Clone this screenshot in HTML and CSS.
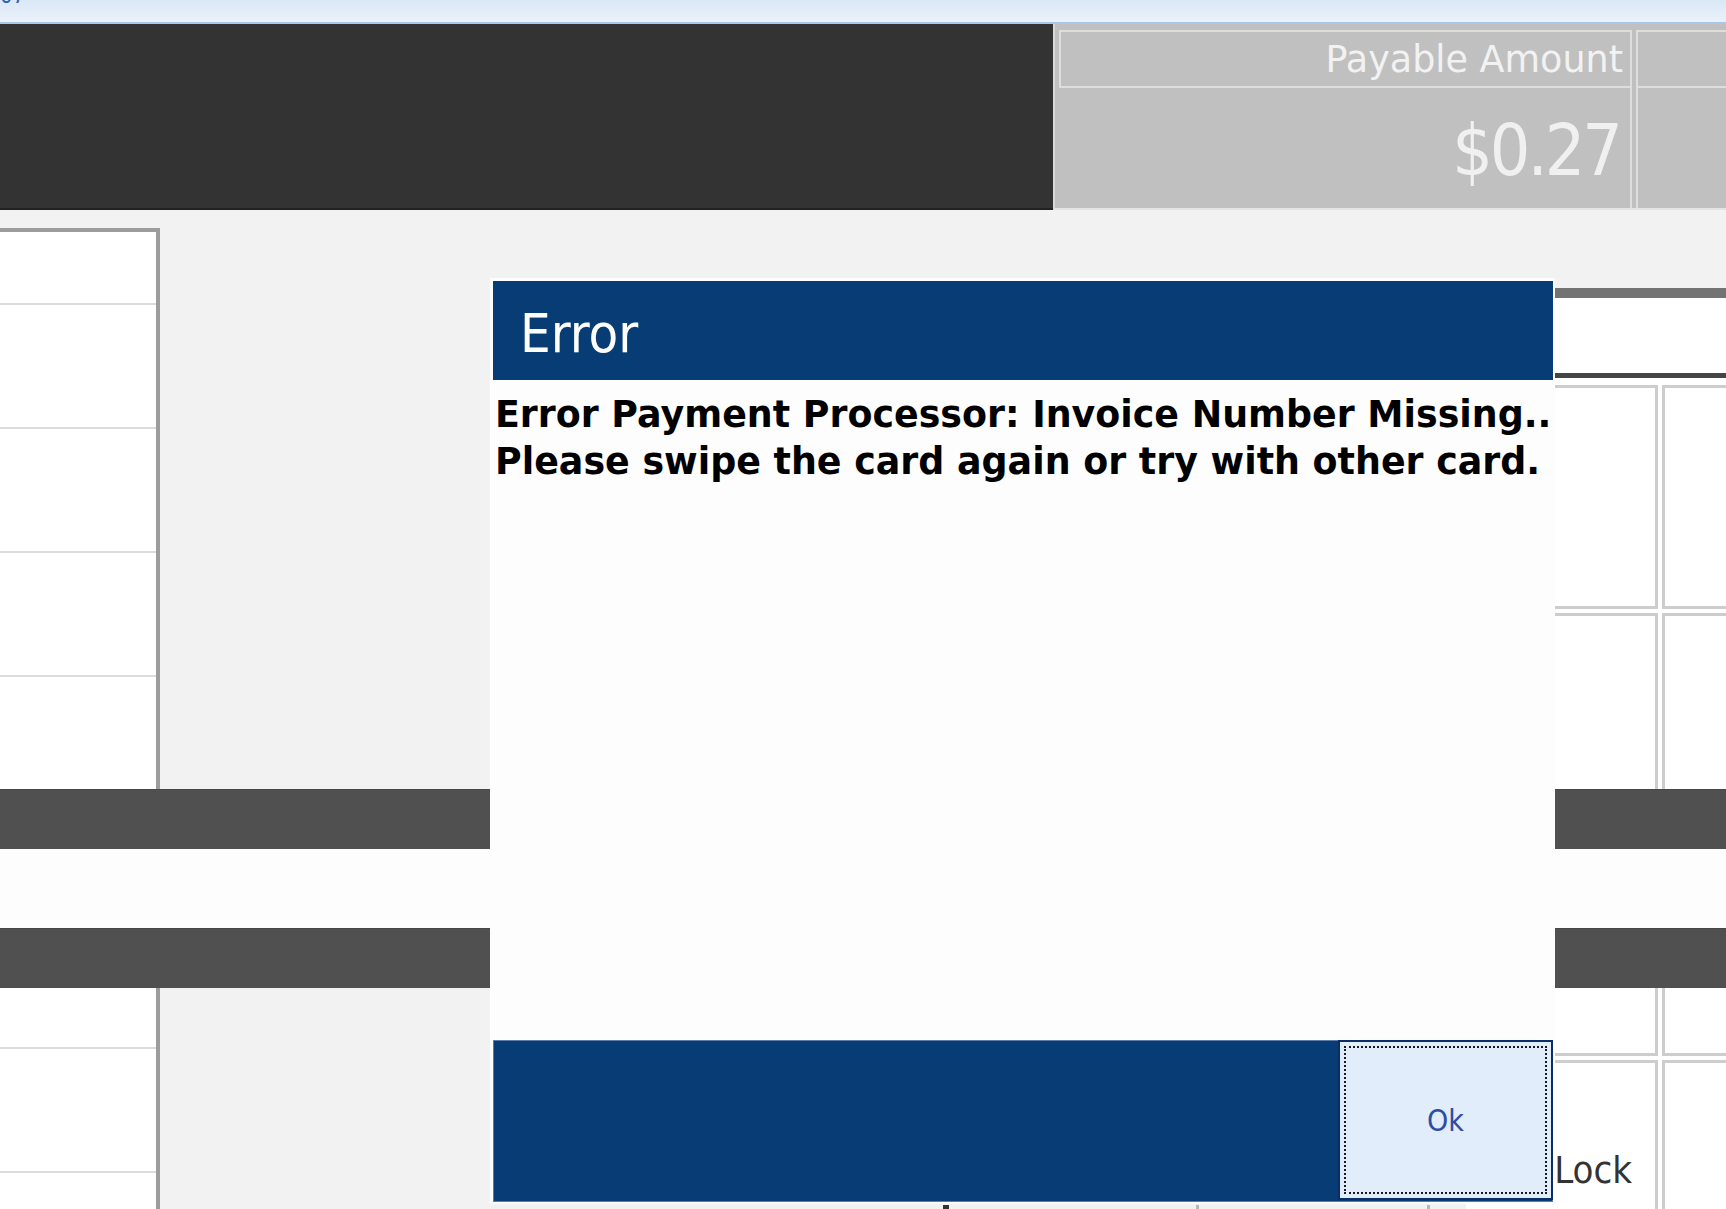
FILE: index.html
```html
<!DOCTYPE html>
<html lang="en">
<head>
    <meta charset="UTF-8">
    <meta name="viewport" content="width=device-width, initial-scale=1.0">
    <title>POS - Error</title>
    <link rel="stylesheet" href="styles.css">
</head>
<body>
    <!-- window caption strip (mostly scrolled off) -->
    <div class="titlestrip"><span class="clock">07</span></div>

    <!-- header with totals -->
    <header class="topbar">
        <div class="brand"></div>
        <div class="totals">
            <div class="total-label">Payable Amount</div>
            <div class="total-label next"></div>
            <div class="total-value">$0.27</div>
            <div class="total-value next"></div>
        </div>
    </header>

    <!-- upper work area -->
    <section class="upper">
        <ul class="ticket">
            <li class="first"></li>
            <li></li>
            <li></li>
            <li></li>
            <li></li>
        </ul>
        <div class="workspace"></div>
        <div class="keys">
            <div class="keys-head"></div>
            <div class="key-grid">
                <div class="key left"></div>
                <div class="key"></div>
                <div class="key left"></div>
                <div class="key"></div>
            </div>
        </div>
    </section>

    <div class="strip"></div>
    <div class="spacer"></div>
    <div class="strip"></div>

    <!-- lower work area -->
    <section class="lower">
        <ul class="ticket">
            <li class="first"></li>
            <li></li>
            <li></li>
        </ul>
        <div class="workspace">
            <div class="marks">
                <span class="mark dark"></span>
                <span class="mark"></span>
                <span class="mark last"></span>
            </div>
        </div>
        <div class="keys">
            <div class="key-grid">
                <div class="key top left"></div>
                <div class="key top"></div>
                <div class="key left"><span class="key-text">Lock</span></div>
                <div class="key"></div>
            </div>
        </div>
    </section>

    <!-- error dialog on top of everything -->
    <div class="dialog">
        <div class="dialog-title">Error</div>
        <div class="dialog-body">
            <p class="message">Error Payment Processor: Invoice Number Missing..</p>
            <p class="message">Please swipe the card again or try with other card.</p>
        </div>
        <div class="dialog-foot">
            <button class="ok-button">Ok</button>
        </div>
    </div>
</body>
</html>
```

FILE: styles.css
```css
body {
    margin: 0;
    padding: 0;
    height: 1209px;
    overflow: hidden;
    background-color: #f2f2f2;
    font-family: "DejaVu Sans Condensed", "DejaVu Sans", sans-serif;
    position: relative;
}

/* caption strip */
.titlestrip {
    height: 22px;
    overflow: hidden;
    background: linear-gradient(#dbe7f6, #eaf2fb);
    border-bottom: 2px solid #a9c5e9;
}

.clock {
    display: block;
    margin-top: -17px;
    font-size: 22px;
    color: #2d5fb3;
}

/* header */
.topbar {
    display: flex;
    height: 186px;
    box-sizing: border-box;
}

.brand {
    width: 1053px;
    background-color: #333;
    border-bottom: 2px solid #222;
}

.totals {
    flex: 1;
    display: grid;
    grid-template-columns: 577px 1fr;
    grid-template-rows: 58px 1fr;
    column-gap: 4px;
    padding-top: 6px;
    background-color: #c0c0c0;
    border-left: 2px solid #d8d8d8;
    border-bottom: 2px solid #e4e4e4;
}

.total-label {
    margin-left: 4px;
    border: 2px solid #dedede;
    padding: 3px 7px 0 0;
    text-align: right;
    font-family: "DejaVu Sans", sans-serif;
    font-size: 36.5px;
    line-height: 50px;
    color: #f2f2f2;
    white-space: nowrap;
}

.total-label.next {
    margin-left: 0;
    border-right: none;
}

.total-value {
    border-right: 2px solid #dedede;
    padding: 23px 10px 0 0;
    text-align: right;
    font-size: 71px;
    line-height: 80px;
    letter-spacing: -3px;
    color: #f0f0f0;
}

.total-value.next {
    border-right: none;
    border-left: 2px solid #dedede;
}

/* work areas */
.upper {
    display: flex;
    height: 579px;
}

.lower {
    display: flex;
    height: 221px;
}

.ticket {
    flex-shrink: 0;
    list-style: none;
    margin: 18px 0 0 0;
    padding: 0;
    width: 156px;
    background-color: #fff;
    border-top: 4px solid #9c9c9c;
    border-right: 4px solid #9c9c9c;
    overflow: hidden;
}

.lower .ticket {
    margin-top: 0;
    border-top: none;
}

.ticket li {
    height: 122px;
    border-bottom: 2px solid #dcdcdc;
}

.ticket li.first {
    height: 71px;
}

.lower .ticket li.first {
    height: 59px;
}

.workspace {
    flex: 1;
    min-width: 0;
    overflow: hidden;
}

/* tops of buttons peeking out below the dialog */
.marks {
    display: flex;
    height: 100%;
    align-items: flex-end;
    padding-left: 783px;
}

.mark {
    flex-shrink: 0;
    width: 3px;
    height: 4px;
    margin-right: 228px;
    background-color: #b8b8b8;
}

.mark.dark {
    width: 6px;
    margin-right: 247px;
    background-color: #333;
}

.keys {
    flex-shrink: 0;
    width: 260px;
    margin-top: 78px;
    background-color: #fff;
    overflow: hidden;
}

.lower .keys {
    margin-top: 0;
}

.keys-head {
    height: 75px;
    border-top: 10px solid #737373;
    border-bottom: 5px solid #454545;
}

.key-grid {
    display: grid;
    grid-template-columns: 192px 200px;
    grid-template-rows: 224px 200px;
    gap: 4px;
    padding-top: 7px;
}

.lower .key-grid {
    grid-template-rows: 68px 200px;
    padding-top: 0;
}

.key {
    border: 3px solid #cdcdcd;
    background-color: #fff;
    display: flex;
    justify-content: flex-end;
    align-items: flex-start;
}

.key.top {
    border-top: none;
}

.key.left {
    border-left: none;
}

.key-text {
    padding: 88px 23px 0 0;
    font-size: 38px;
    line-height: 38px;
    color: #333;
}

.strip {
    height: 59px;
    background-color: #505050;
    border-top: 1px solid #474747;
}

.spacer {
    height: 79px;
    background-color: #fdfdfd;
}

/* error dialog */
.dialog {
    position: absolute;
    left: 490px;
    top: 278px;
    width: 1065px;
    height: 926px;
    box-sizing: border-box;
    padding: 3px 2px 2px 3px;
    background-color: #fdfdfd;
    display: flex;
    flex-direction: column;
}

.dialog-title {
    height: 99px;
    box-sizing: border-box;
    padding: 7px 0 0 27px;
    background-color: #073c74;
    color: #fff;
    font-size: 54px;
    line-height: 92px;
}

.dialog-body {
    flex: 1;
    padding: 11px 0 0 2px;
}

.message {
    margin: 0;
    font-family: "DejaVu Sans", sans-serif;
    font-size: 36.4px;
    font-weight: bold;
    line-height: 47px;
    color: #000;
    white-space: nowrap;
}

.dialog-foot {
    height: 162px;
    box-sizing: border-box;
    background-color: #073c74;
    border: 1px solid #5b7cad;
    display: flex;
    justify-content: flex-end;
}

.ok-button {
    width: 215px;
    height: 100%;
    margin: -1px -1px -1px 0;
    border: 2px solid #0a2d66;
    background-color: #e2edfc;
    outline: 2px dotted #1a1a1a;
    outline-offset: -8px;
    color: #2c4ea6;
    font-family: "DejaVu Sans Condensed", "DejaVu Sans", sans-serif;
    font-size: 30px;
    padding: 0;
}
```
